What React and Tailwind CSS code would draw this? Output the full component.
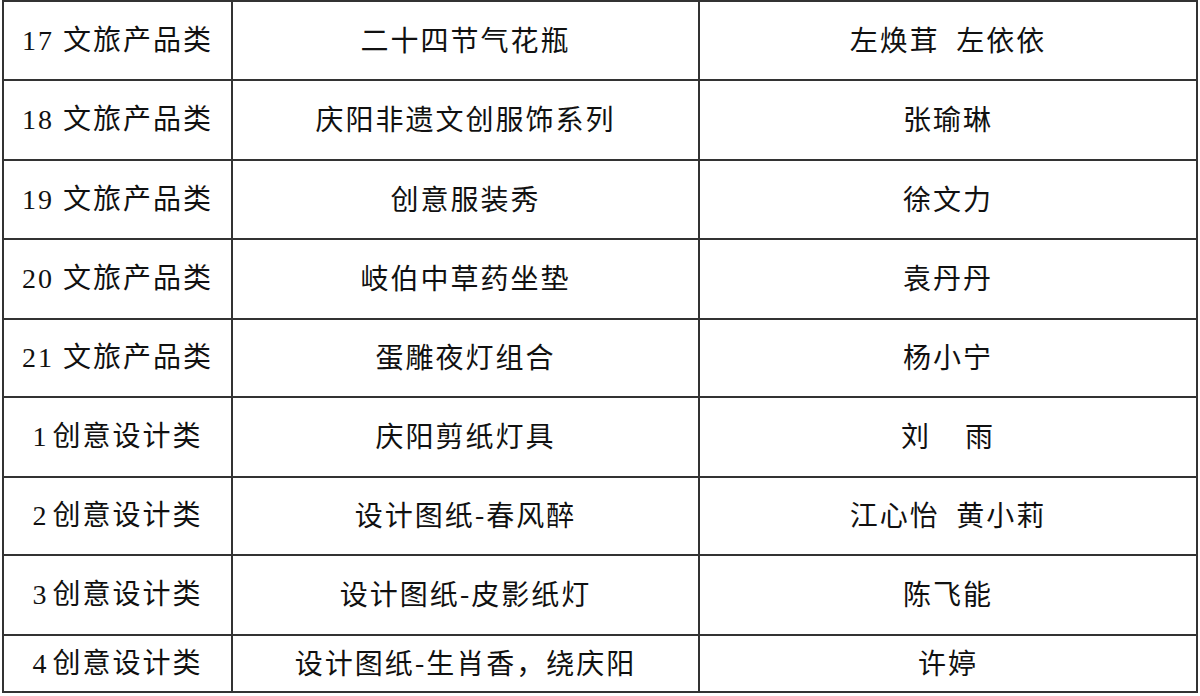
import React from "react";

const rows = [
  { h: "h-[79px]", a: "17 文旅产品类", b: "二十四节气花瓶", c: "左焕茸  左依依" },
  { h: "h-[80px]", a: "18 文旅产品类", b: "庆阳非遗文创服饰系列", c: "张瑜琳" },
  { h: "h-[79px]", a: "19 文旅产品类", b: "创意服装秀", c: "徐文力" },
  { h: "h-[80px]", a: "20 文旅产品类", b: "岐伯中草药坐垫", c: "袁丹丹" },
  { h: "h-[78px]", a: "21 文旅产品类", b: "蛋雕夜灯组合", c: "杨小宁" },
  { h: "h-[80px]", a: "1创意设计类", b: "庆阳剪纸灯具", c: "刘雨" },
  { h: "h-[78px]", a: "2创意设计类", b: "设计图纸-春风醉", c: "江心怡  黄小莉" },
  { h: "h-[80px]", a: "3创意设计类", b: "设计图纸-皮影纸灯", c: "陈飞能" },
  { h: "h-[55px]", a: "4创意设计类", b: "设计图纸-生肖香，绕庆阳", c: "许婷", last: true },
];

function Cell({ children, className, cjk }) {
  return (
    <div
      className={`flex items-center justify-center whitespace-pre text-[28px] tracking-[2px] text-[#111] ${cjk ? "pb-[4px]" : ""} ${className}`}
      style={
        cjk
          ? { fontFamily: '"Noto Sans CJK SC", sans-serif' }
          : { fontFamily: '"Liberation Serif", "Noto Sans CJK SC", serif' }
      }
    >
      {children}
    </div>
  );
}

export default function App() {
  return (
    <div className="w-[1200px] h-[696px] bg-white overflow-hidden">
      <div className="ml-[2px] w-[1196px] border-2 border-[#333] box-border flex flex-col">
        {rows.map((r, i) => (
          <div
            key={i}
            className={`flex ${r.h} ${r.last ? "" : "border-b-2 border-[#333]"} box-border`}
          >
            <Cell className="w-[229px] border-r-2 border-[#333] box-border">
              {r.a.match(/^\d+ /) ? r.a : (
                <>
                  {r.a[0]}
                  <span className="inline-block w-[4px]"></span>
                  {r.a.slice(1)}
                </>
              )}
            </Cell>
            <Cell cjk className="w-[467px] border-r-2 border-[#333] box-border">{r.b}</Cell>
            <Cell cjk className="flex-1">
              {r.c === "刘雨" ? (
                <>
                  刘<span className="inline-block w-[34px]"></span>雨
                </>
              ) : (
                r.c
              )}
            </Cell>
          </div>
        ))}
      </div>
    </div>
  );
}
